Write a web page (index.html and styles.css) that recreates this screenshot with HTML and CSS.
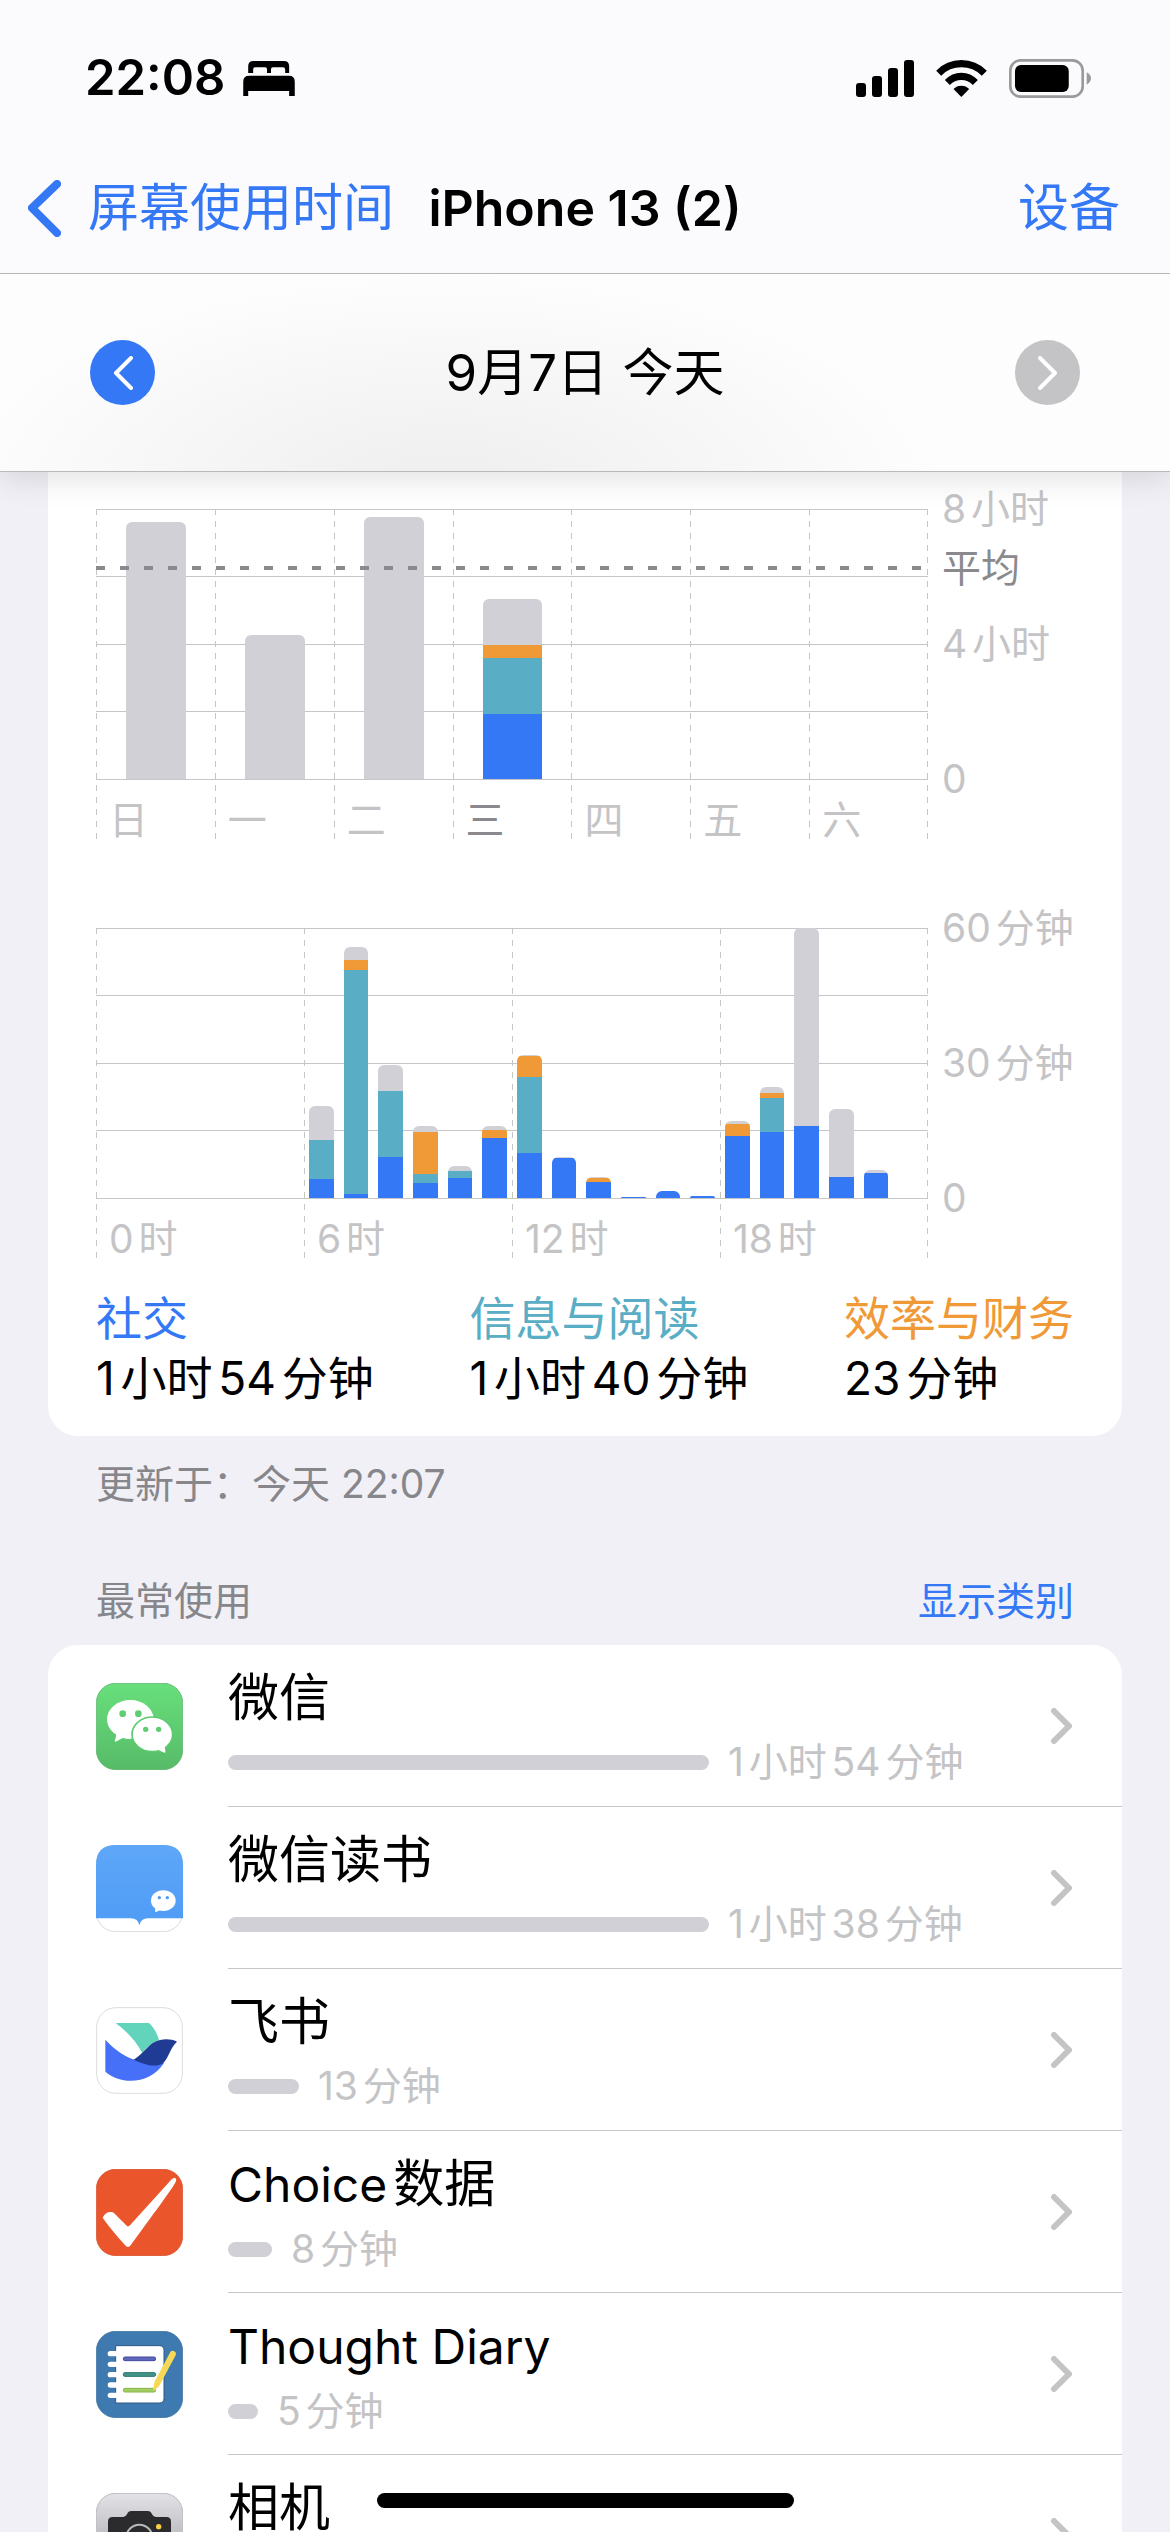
FILE: index.html
```html
<!DOCTYPE html>
<html lang="zh-Hans">
<head>
  <meta charset="UTF-8">
  <meta name="viewport" content="width=device-width, initial-scale=1.0">
  <title>屏幕使用时间</title>
  <link rel="stylesheet" href="styles.css">
</head>
<body>
  <div class="screen">
    <header class="header">
      <div class="status-bar">
        <div class="status-left">
          <span class="clock">22:08</span>
          <svg class="bed" viewBox="666 62 156 106" aria-hidden="true">
            <path d="M681 98V78Q681 62 697 62H789Q805 62 805 78V98H793V88Q793 81 786 81H756Q750 81 750 87V98H738V87Q738 81 732 81H702Q696 81 696 88V98Z"/>
            <path d="M666 168V125Q666 107 684 107H804Q822 107 822 125V168H805V153H681V168Z"/>
          </svg>
        </div>
        <div class="status-right">
          <svg class="signal" viewBox="48 57 174 111" aria-hidden="true">
            <rect x="48" y="126" width="30" height="42" rx="9"/>
            <rect x="96" y="105" width="30" height="63" rx="9"/>
            <rect x="144" y="81" width="30" height="87" rx="9"/>
            <rect x="192" y="57" width="30" height="111" rx="9"/>
          </svg>
          <svg class="wifi" viewBox="289 57 152 111" aria-hidden="true">
            <path d="M289 89Q320 57 364.500 57T441 89L426 104Q400 79 364.500 79T304 104Z"/>
            <path d="M315 117Q336 95 364.500 95T414 117L399 132Q385 117 364.500 117T330 132Z"/>
            <path d="M341 144Q350 134 364.500 134T388 144L364.500 168Z"/>
          </svg>
          <svg class="battery" viewBox="507 54 247 117" aria-hidden="true">
            <rect x="511" y="58" width="218" height="109" rx="31" fill="none" stroke="#9a9a9b" stroke-width="8"/>
            <rect x="525" y="72" width="162" height="81" rx="18"/>
            <path d="M741 94Q754 101 754 112T741 131Z" fill="#9a9a9b"/>
          </svg>
        </div>
      </div>
      <nav class="nav">
        <a class="back" href="#">
          <svg class="back-icon" viewBox="0 0 33 57" aria-hidden="true"><path d="M29 4L4 28L29 53"/></svg>
          屏幕使用时间
        </a>
        <h1 class="title">iPhone 13 (2)</h1>
        <a class="devices" href="#">设备</a>
      </nav>
      <div class="date-bar">
        <button class="circle" type="button" aria-label="前一天">
          <svg viewBox="0 0 20 34" aria-hidden="true"><path d="M18 2L3 17L18 32"/></svg>
        </button>
        <span class="date">9月7日 今天</span>
        <button class="circle" type="button" aria-label="后一天" disabled>
          <svg viewBox="0 0 20 34" aria-hidden="true"><path d="M2 2L17 17L2 32"/></svg>
        </button>
      </div>
    </header>

    <main class="content">
      <section class="card usage">
        <div class="chart">
          <div class="plot week" id="weekPlot">
            <div class="average"><span>平均</span></div>
          </div>
          <div class="axis"><span>8小时</span><span>4小时</span><span>0</span></div>
        </div>
        <div class="chart">
          <div class="plot day" id="dayPlot"></div>
          <div class="axis"><span>60分钟</span><span>30分钟</span><span>0</span></div>
        </div>
        <dl class="legend">
          <div><dt class="social-text">社交</dt><dd>1小时54分钟</dd></div>
          <div><dt class="reading-text">信息与阅读</dt><dd>1小时40分钟</dd></div>
          <div><dt class="finance-text">效率与财务</dt><dd>23分钟</dd></div>
        </dl>
      </section>
      <p class="updated">更新于：今天 22:07</p>

      <div class="section-head">
        <h2>最常使用</h2>
        <button type="button">显示类别</button>
      </div>
      <section class="card apps">
        <a class="app" href="#">
          <svg class="app-icon" viewBox="48 66 261 261" aria-hidden="true">
            <defs>
              <linearGradient id="green" x1="0" y1="0" x2="0" y2="1"><stop offset="0" stop-color="#68df7c"/><stop offset="1" stop-color="#57bb68"/></linearGradient>
            </defs>
            <rect x="49" y="67" width="259" height="259" rx="58" fill="url(#green)" stroke="#4fae61" stroke-width="2"/>
            <ellipse cx="151" cy="175" rx="70" ry="58" fill="#fff"/>
            <path d="M109 218Q108 230 104 240Q106 244 110 241L128 231L150 235V210Z" fill="#fff"/>
            <ellipse cx="217" cy="220" rx="61" ry="52" fill="#fff" stroke="#5dca70" stroke-width="5"/>
            <path d="M234 266L253 275Q258 275 256 269L254 256L240 250Z" fill="#fff"/>
            <g fill="#5fce72"><circle cx="128" cy="158" r="10"/><circle cx="175" cy="158" r="10"/><circle cx="197" cy="205" r="8"/><circle cx="236" cy="205" r="8"/></g>
          </svg>
          <div class="app-info">
            <span class="name">微信</span>
            <span class="time"><i class="meter" style="width: 481px"></i>1小时54分钟</span>
          </div>
          <svg class="chevron" viewBox="0 0 22 36" aria-hidden="true"><path d="M4 3L19 18L4 33"/></svg>
        </a>
        <a class="app" href="#">
          <svg class="app-icon" viewBox="48 552 261 261" aria-hidden="true">
            <defs>
              <linearGradient id="blue" x1="0" y1="0" x2="0" y2="1"><stop offset="0" stop-color="#5ea7f8"/><stop offset="1" stop-color="#4f9cf6"/></linearGradient>
            </defs>
            <rect x="49" y="553" width="259" height="259" rx="58" fill="#fff" stroke="#dadadc" stroke-width="3"/>
            <path d="M48 772V611Q48 552 107 552H250Q309 552 309 611V772H203Q183 772 178 793Q174 772 153 772Z" fill="url(#blue)"/>
            <ellipse cx="250" cy="719" rx="37" ry="31" fill="#fff"/>
            <path d="M227 738L225 751Q227 754 230 752L239 748L246 742Z" fill="#fff"/>
            <g fill="#4f9cf6"><circle cx="238" cy="710" r="5"/><circle cx="262" cy="710" r="5"/></g>
          </svg>
          <div class="app-info">
            <span class="name">微信读书</span>
            <span class="time"><i class="meter" style="width: 481px"></i>1小时38分钟</span>
          </div>
          <svg class="chevron" viewBox="0 0 22 36" aria-hidden="true"><path d="M4 3L19 18L4 33"/></svg>
        </a>
        <a class="app" href="#">
          <svg class="app-icon" viewBox="48 78 261 261" aria-hidden="true">
            <rect x="50" y="80" width="257" height="257" rx="58" fill="#fff" stroke="#dcdcde" stroke-width="3"/>
            <path d="M109 126H207C221 138 232 158 237 178C215 185 200 200 187 216C168 181 140 150 109 128Z" fill="#61d4bb"/>
            <path d="M76 176C105 208 137 228 163 236L252 246C210 312 122 312 77 273Q76 272 76 269Z" fill="#4570f7"/>
            <path d="M161 236C191 219 208 183 240 177C258 173 277 175 291 182C270 202 267 228 250 246C226 262 192 250 161 236Z" fill="#203b94"/>
          </svg>
          <div class="app-info">
            <span class="name">飞书</span>
            <span class="time"><i class="meter" style="width: 71px"></i>13分钟</span>
          </div>
          <svg class="chevron" viewBox="0 0 22 36" aria-hidden="true"><path d="M4 3L19 18L4 33"/></svg>
        </a>
        <a class="app" href="#">
          <svg class="app-icon" viewBox="48 564 261 261" aria-hidden="true">
            <rect x="49" y="565" width="259" height="259" rx="58" fill="#ea552b" stroke="#d14c27" stroke-width="2"/>
            <path d="M69 708C74 697 87 691 98 694C103 696 108 703 140 734Q145 738 150 733L275 595C283 588 291 590 288 600C282 616 240 672 152 793Q145 802 137 794C110 765 90 740 70 713Q68 711 69 708Z" fill="#fff"/>
          </svg>
          <div class="app-info">
            <span class="name"><span class="latin">Choice</span>数据</span>
            <span class="time"><i class="meter" style="width: 44px"></i>8分钟</span>
          </div>
          <svg class="chevron" viewBox="0 0 22 36" aria-hidden="true"><path d="M4 3L19 18L4 33"/></svg>
        </a>
        <a class="app" href="#">
          <svg class="app-icon" viewBox="48 90 261 261" aria-hidden="true">
            <rect x="49" y="91" width="259" height="259" rx="58" fill="#3e79af" stroke="#386e9f" stroke-width="2"/>
            <path d="M107 134H238Q252 134 252 148V292Q252 306 238 306H107Z" fill="#fff" stroke="#2c5987" stroke-width="3"/>
            <g fill="#fff"><rect x="83" y="150" width="34" height="16" rx="8"/><rect x="83" y="182" width="34" height="16" rx="8"/><rect x="83" y="213" width="34" height="16" rx="8"/><rect x="83" y="244" width="34" height="16" rx="8"/><rect x="83" y="275" width="34" height="16" rx="8"/></g>
            <g stroke-width="3"><rect x="130" y="168" width="97" height="11" rx="5" fill="#6068bb" stroke="#434a9f"/><rect x="130" y="215" width="97" height="11" rx="5" fill="#43958a" stroke="#267268"/><rect x="130" y="262" width="97" height="11" rx="5" fill="#a5cd66" stroke="#86b646"/></g>
            <path d="M271 153Q276 147 283 151T287 163L238 254L225 267Q218 270 220 262L223 244Z" fill="#f5d855"/>
          </svg>
          <div class="app-info">
            <span class="name"><span class="latin">Thought Diary</span></span>
            <span class="time"><i class="meter" style="width: 30px"></i>5分钟</span>
          </div>
          <svg class="chevron" viewBox="0 0 22 36" aria-hidden="true"><path d="M4 3L19 18L4 33"/></svg>
        </a>
        <a class="app" href="#">
          <svg class="app-icon" viewBox="48 576 261 261" aria-hidden="true">
            <defs>
              <linearGradient id="silver" x1="0" y1="0" x2="0" y2="1"><stop offset="0" stop-color="#e3e2e7"/><stop offset="1" stop-color="#98979c"/></linearGradient>
            </defs>
            <rect x="49" y="577" width="259" height="259" rx="58" fill="url(#silver)" stroke="#bdbcc0" stroke-width="3"/>
            <path d="M84 662Q84 648 98 648H130Q137 648 141 640Q145 630 154 630H203Q212 630 216 640Q220 648 227 648H259Q273 648 273 662V756Q273 770 259 770H98Q84 770 84 756Z" fill="#2b2b2d"/>
            <circle cx="178" cy="710" r="39" fill="none" stroke="#b9b9bd" stroke-width="6"/>
            <circle cx="236" cy="677" r="8" fill="#f9cd45"/>
          </svg>
          <div class="app-info">
            <span class="name">相机</span>
          </div>
          <svg class="chevron" viewBox="0 0 22 36" aria-hidden="true"><path d="M4 3L19 18L4 33"/></svg>
        </a>
      </section>
    </main>
    <div class="home-indicator"></div>
  </div>

  <script>
    const kinds = ['social', 'reading', 'finance', 'other'];

    // 每天: [社交, 信息与阅读, 效率与财务, 其他]，单位分钟
    const week = [
      { label: '日', use: [0, 0, 0, 457] },
      { label: '一', use: [0, 0, 0, 256] },
      { label: '二', use: [0, 0, 0, 466] },
      { label: '三', use: [116, 100, 23, 81], today: true },
      { label: '四', use: [] },
      { label: '五', use: [] },
      { label: '六', use: [] }
    ];

    // 每小时，从 0 时开始
    const hours = [
      [], [], [], [], [], [],
      [4.2, 8.7, 0, 7.6], [0.9, 49.8, 2.2, 2.9], [9.1, 14.7, 0, 5.8],
      [3.3, 2, 9.3, 1.4], [4.4, 1.6, 0, 1.1], [13.3, 0, 1.8, 0.9],
      [10, 16.9, 4.7, 0.2], [8.9, 0, 0, 0.2], [3.6, 0, 0.9, 0.2],
      [0.3], [1.6], [0.5],
      [13.8, 0, 2.7, 0.7], [14.7, 7.6, 1.1, 1.3], [16, 0, 0, 44],
      [4.7, 0, 0, 15.1], [5.6, 0, 0, 0.7], []
    ];

    function bar(values, max) {
      const total = values.reduce((a, b) => a + b, 0);
      const parts = values.map((v, i) =>
        v ? `<div class="${kinds[i]}" style="height: ${v / total * 100}%"></div>` : ''
      );
      return `<div class="slot"><div class="bar" style="height: ${total / max * 100}%">${parts.join('')}</div></div>`;
    }

    let weekHtml = '';
    week.forEach(day => {
      weekHtml += `
        <div class="col${day.today ? ' today' : ''}">
          <div class="bars">${bar(day.use, 480)}</div>
          <span>${day.label}</span>
        </div>`;
    });
    document.getElementById('weekPlot').insertAdjacentHTML('beforeend', weekHtml);

    let dayHtml = '';
    for (let h = 0; h < 24; h += 6) {
      dayHtml += `
        <div class="col">
          <div class="bars">${hours.slice(h, h + 6).map(v => bar(v, 60)).join('')}</div>
          <span>${h}时</span>
        </div>`;
    }
    document.getElementById('dayPlot').innerHTML = dayHtml;
  </script>
</body>
</html>
```
FILE: styles.css
```css
* {
  box-sizing: border-box;
}
body {
  margin: 0;
  font-family: Inter, "Noto Sans CJK SC", sans-serif;
  font-size: 39px;
  line-height: 48px;
  color: #000;
  background-color: #f1f0f6;
  text-autospace: normal;
}
h1, h2, p, dl, dd {
  margin: 0;
  font-weight: 400;
}
a {
  color: inherit;
  text-decoration: none;
}
button {
  font: inherit;
  border: none;
  padding: 0;
  background: none;
  cursor: pointer;
}
svg {
  display: block;
  flex: none;
}
.screen {
  position: relative;
  display: flex;
  flex-direction: column;
  height: 100vh;
  overflow: hidden;
}

/* header */
.header {
  position: relative;
  z-index: 1;
  flex: none;
  background-color: #fbfbfd;
  border-bottom: 1px solid #b9b9bc;
  box-shadow: 0 6px 30px rgba(0,0,0,0.12);
}
.status-bar {
  display: flex;
  justify-content: space-between;
  align-items: center;
  height: 141px;
  padding: 15px 79px 0 85px;
}
.status-left, .status-right {
  display: flex;
  align-items: center;
}
.status-left {
  gap: 18px;
}
.status-right {
  gap: 22px;
}
.clock {
  font-size: 49px;
  font-weight: 600;
}
.bed {
  width: 52px;
  height: 35px;
}
.signal {
  width: 58px;
  height: 37px;
}
.wifi {
  width: 51px;
  height: 37px;
}
.battery {
  width: 82px;
  height: 39px;
}
.nav {
  display: grid;
  grid-template-columns: minmax(0, 1fr) auto minmax(0, 1fr);
  align-items: center;
  height: 133px;
  padding: 2px 28px 0;
  font-size: 51px;
  line-height: 60px;
  border-bottom: 1px solid #b9b9bc;
}
.back, .devices {
  color: #3478f6;
}
.back {
  display: flex;
  align-items: center;
  gap: 27px;
  white-space: nowrap;
}
.back-icon {
  width: 33px;
  height: 57px;
  fill: none;
  stroke: #3478f6;
  stroke-width: 8;
  stroke-linecap: round;
  stroke-linejoin: round;
}
.devices {
  justify-self: end;
  padding-right: 22px;
}
.title {
  font-size: 50px;
  font-weight: 600;
}
.date-bar {
  display: flex;
  justify-content: space-between;
  align-items: center;
  height: 197px;
  padding: 0 90px;
  background: radial-gradient(ellipse 42% 110% at 38% 110%, #eeeeee, #fdfdfd);
}
.date {
  font-size: 51px;
  line-height: 60px;
  text-autospace: no-autospace;
}
.circle {
  display: flex;
  justify-content: center;
  align-items: center;
  width: 65px;
  height: 65px;
  border-radius: 50%;
  background-color: #3478f6;
}
.circle:disabled {
  background-color: #c4c4c6;
}
.circle svg {
  width: 20px;
  height: 34px;
  fill: none;
  stroke: #fff;
  stroke-width: 4;
  stroke-linecap: round;
  stroke-linejoin: round;
}

/* content */
.content {
  padding: 0 48px;
}
.card {
  background-color: #fff;
  border-radius: 30px;
}
.usage {
  padding: 37px 48px 28px;
  border-radius: 0 0 30px 30px;
}

/* charts */
.chart {
  display: flex;
  gap: 14px;
  margin-bottom: 89px;
}
.plot {
  --line: linear-gradient(#c6c6c8, #c6c6c8);
  --dash: repeating-linear-gradient(#c6c6c8 0 6px, transparent 6px 12px);
  position: relative;
  flex: 1;
  display: grid;
  height: 330px;
  background:
    var(--line) 0 0 / 100% 1px no-repeat,
    var(--line) 0 67px / 100% 1px no-repeat,
    var(--line) 0 135px / 100% 1px no-repeat,
    var(--line) 0 202px / 100% 1px no-repeat,
    var(--line) 0 270px / 100% 1px no-repeat,
    var(--dash) 100% 0 / 1px 100% no-repeat;
}
.week {
  grid-template-columns: repeat(7, 1fr);
}
.day {
  grid-template-columns: repeat(4, 1fr);
}
.col {
  background: var(--dash) 0 0 / 1px 100% no-repeat;
  color: #c4c4c6;
}
.col > span {
  display: block;
  padding: 17px 0 0 13px;
}
.today > span, .average {
  color: #8a8a8e;
}
.bars {
  display: flex;
  height: 270px;
}
.slot {
  flex: 1;
  display: flex;
  align-items: flex-end;
  padding: 0 5px;
}
.week .slot {
  padding: 0 29px 0 30px;
}
.bar {
  flex: 1;
  display: flex;
  flex-direction: column-reverse;
  border-radius: 6px 6px 0 0;
  overflow: hidden;
}
.social {
  background-color: #3478f6;
}
.reading {
  background-color: #59adc4;
}
.finance {
  background-color: #f09a37;
}
.other {
  background-color: #d1d0d6;
}
.average {
  position: absolute;
  top: 57px;
  left: 0;
  width: 100%;
  height: 4px;
  background: repeating-linear-gradient(to right, #8a8a8e 0 9px, transparent 9px 24px);
}
.average span {
  position: absolute;
  top: -22px;
  left: 100%;
  margin-left: 14px;
  white-space: nowrap;
}
.axis {
  display: flex;
  flex-direction: column;
  justify-content: space-between;
  width: 132px;
  height: 318px;
  margin-top: -24px;
  color: #c4c4c6;
  white-space: nowrap;
}

.legend {
  display: flex;
  justify-content: space-between;
  margin-top: -59px;
  font-size: 46px;
  line-height: 60px;
}
.social-text {
  color: #3478f6;
}
.reading-text {
  color: #59adc4;
}
.finance-text {
  color: #f09a37;
}
.updated {
  padding: 24px 48px 0;
  color: #86868b;
}
.section-head {
  display: flex;
  justify-content: space-between;
  padding: 69px 48px 20px;
  color: #86868b;
}
.section-head h2 {
  font-size: 39px;
}
.section-head button {
  color: #3478f6;
}

/* app list */
.app {
  display: flex;
  align-items: center;
  height: 162px;
  padding: 0 50px 0 48px;
  background: linear-gradient(#c6c6c8, #c6c6c8) 180px 100% / 100% 1px no-repeat;
}
.app-icon {
  width: 87px;
  height: 87px;
}
.app-info {
  flex: 1;
  align-self: flex-start;
  padding-top: 23px;
  margin-left: 45px;
}
.name {
  display: block;
  font-size: 51px;
  line-height: 60px;
}
.latin {
  font-size: 48px;
}
.time {
  display: flex;
  align-items: center;
  gap: 19px;
  margin-top: 10px;
  color: #c4c4c6;
}
.meter {
  height: 15px;
  border-radius: 8px;
  background-color: #d1d0d6;
}
.chevron {
  width: 22px;
  height: 36px;
  fill: none;
  stroke: #c4c4c6;
  stroke-width: 6;
  stroke-linecap: round;
  stroke-linejoin: round;
}
.home-indicator {
  position: absolute;
  bottom: 24px;
  left: 50%;
  width: 417px;
  height: 15px;
  margin-left: -208px;
  border-radius: 8px;
  background-color: #000;
}
```
